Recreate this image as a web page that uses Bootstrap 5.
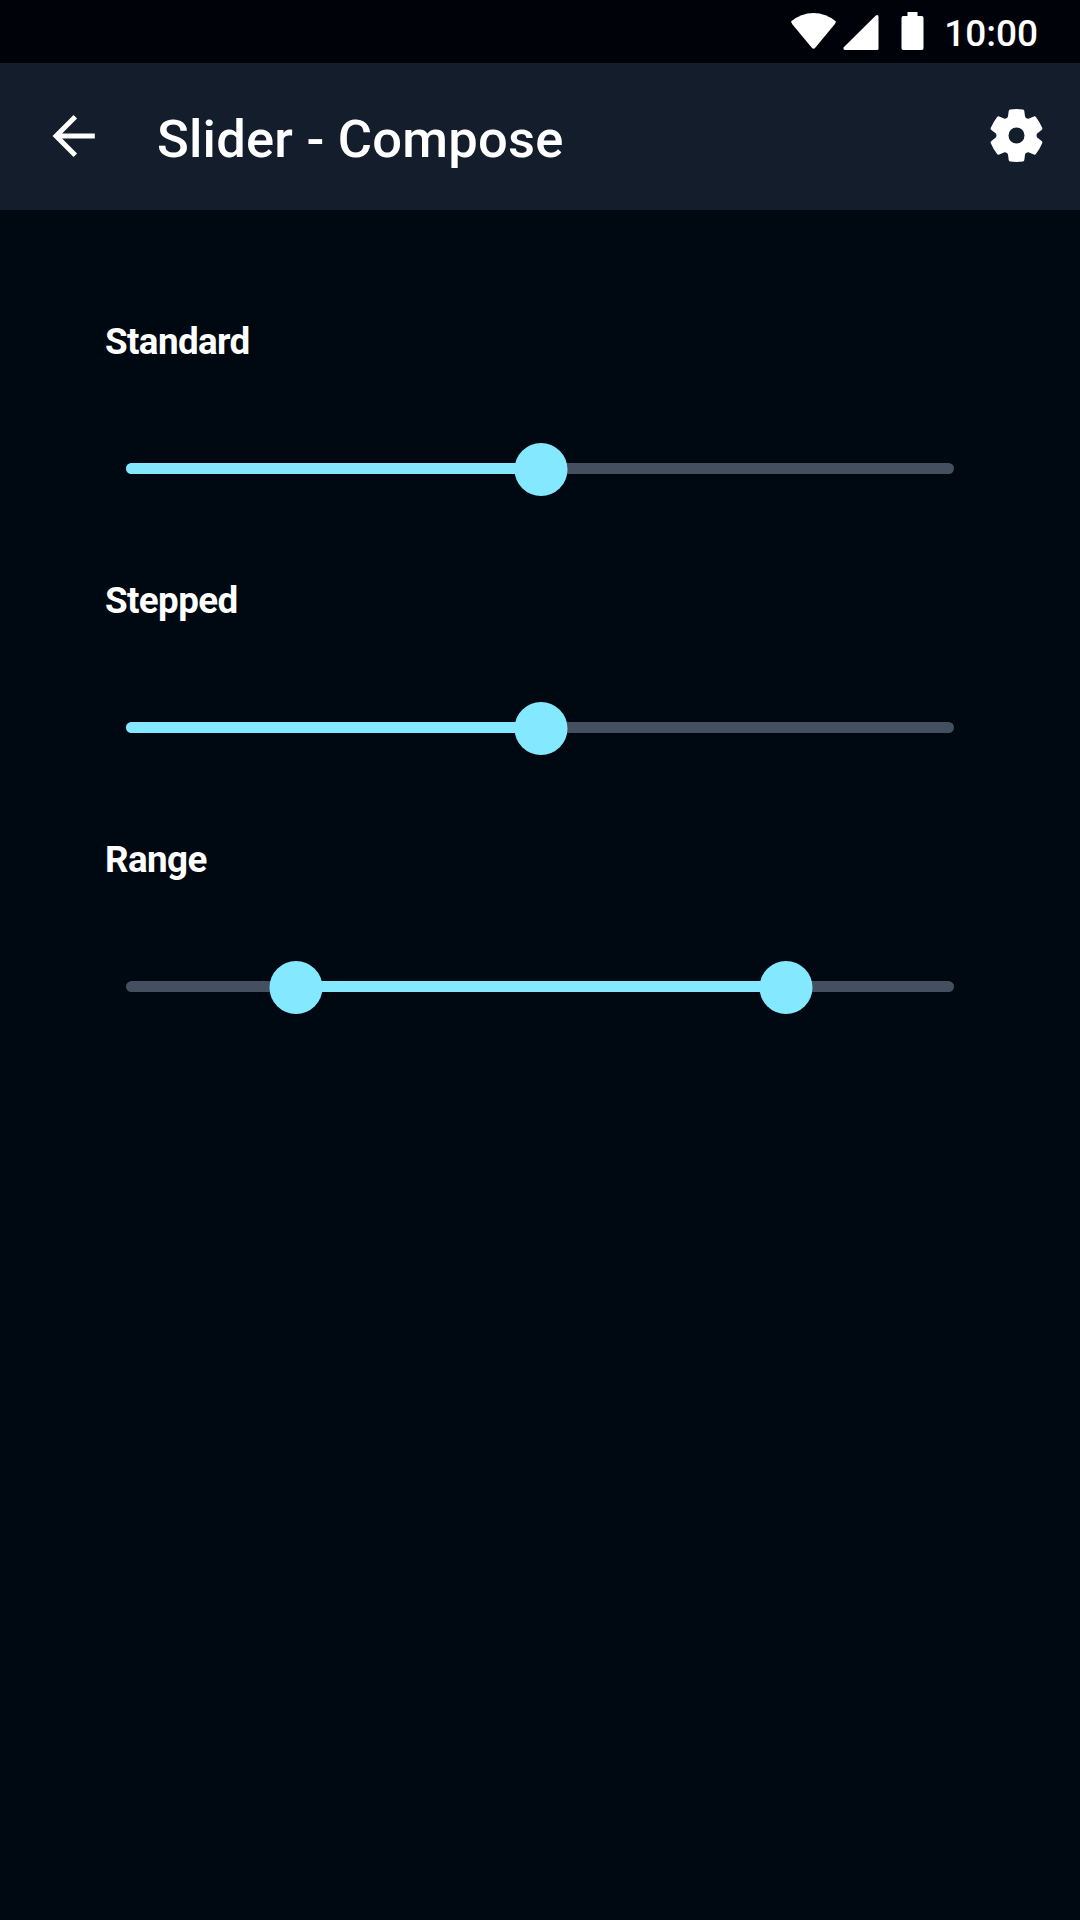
<!DOCTYPE html>
<html lang="en" data-bs-theme="dark">
<head>
<meta charset="utf-8">
<meta name="viewport" content="width=device-width, initial-scale=1">
<title>Slider - Compose</title>
<link href="https://cdn.jsdelivr.net/npm/bootstrap@5.3.0/dist/css/bootstrap.min.css" rel="stylesheet">
<style>
body{background:#000811;color:#fff;font-family:Roboto,"Liberation Sans",sans-serif;min-height:1920px}
.status-strip{height:63px;background:#000209;padding-right:42px}
.status-strip svg{height:63px;width:138px;margin-right:15px}
.clock{font-size:37px;font-weight:500;line-height:63px;padding-top:3px}
.app-bar{height:147px;background:#141d2b;padding:0 36px 0 52px}
.app-title{font-size:52.5px;font-weight:500;line-height:63px;margin:5px 0 0 62px;letter-spacing:.22px}
.icon-btn{line-height:0;color:#fff}
.icon-btn svg{display:block;margin-bottom:1px}
.content-area{padding:105px 105px 0}
.slider-block{height:259px}
.slider-title{font-size:36.75px;font-weight:700;line-height:53px;margin:0;letter-spacing:-.6px}
.track-wrap{margin:75px 21px 0;height:53px}
.track-line{height:11px;border-radius:6px;background:#44505f;width:100%;margin-top:-2px}
.track-fill{height:11px;background:#84e8ff}
.from-start{border-radius:6px 0 0 6px}
.knob{width:53px;height:53px;border-radius:50%;background:#84e8ff;top:0;transform:translateX(-50%)}
</style>
</head>
<body>
<div class="status-strip d-flex justify-content-end align-items-center">
<svg viewBox="0 0 138 63" fill="#fff" aria-hidden="true">
<path d="M0 21.500Q10 13 22.500 13T45 21.500Q44.500 23 43.500 24.500L24 48Q22.500 49.500 21 48L1.500 24.500Q.5 23 0 21.500Z"/>
<path d="M84.800 15.500Q87.500 13.800 87.500 16.800V48.500Q87.500 50 86 50H54Q52.500 50 52.500 48.500V47.500Z"/>
<path d="M116.500 12H126.500V16H130.800Q132.500 16 132.500 17.700V48.300Q132.500 50 130.800 50H112.200Q110.500 50 110.500 48.300V17.700Q110.500 16 112.200 16H116.500Z"/>
</svg>
<span class="clock">10:00</span>
</div>
<header class="app-bar d-flex align-items-center">
<a class="icon-btn" href="#" aria-label="Back"><svg width="43" height="42" viewBox="0 0 43 42" fill="none" stroke="#fff" stroke-width="5"><path d="M42.800 21H5M23.300 1.800L4.100 21L23.300 40.200"/></svg></a>
<h1 class="app-title">Slider - Compose</h1>
<a class="icon-btn ms-auto" href="#" aria-label="Settings"><svg width="55" height="54" viewBox="-27.500 -26.500 55 54" fill="#fff">
<defs><path id="tooth" d="M-10 -17.300C-9.300 -17.700 -8.700 -18.200 -8.500 -19.300L-7.800 -24.500Q-7.700 -25.900 -6.400 -26.100Q0 -26.900 6.400 -26.100Q7.700 -25.900 7.800 -24.500L8.500 -19.300C8.700 -18.200 9.300 -17.700 10 -17.300L7 -12.100H-7Z"/></defs>
<circle r="13.900" fill="none" stroke="#fff" stroke-width="11.800"/>
<use href="#tooth"/><use href="#tooth" transform="rotate(60)"/><use href="#tooth" transform="rotate(120)"/><use href="#tooth" transform="rotate(180)"/><use href="#tooth" transform="rotate(240)"/><use href="#tooth" transform="rotate(300)"/>
</svg></a>
</header>
<main class="content-area">
<section class="slider-block">
<h2 class="slider-title">Standard</h2>
<div class="track-wrap position-relative d-flex align-items-center">
<div class="track-line"><div class="track-fill from-start" style="width:50%"></div></div>
<span class="knob position-absolute" style="left:50.07%"></span>
</div>
</section>
<section class="slider-block">
<h2 class="slider-title">Stepped</h2>
<div class="track-wrap position-relative d-flex align-items-center">
<div class="track-line"><div class="track-fill from-start" style="width:50%"></div></div>
<span class="knob position-absolute" style="left:50.07%"></span>
</div>
</section>
<section class="slider-block">
<h2 class="slider-title">Range</h2>
<div class="track-wrap position-relative d-flex align-items-center">
<div class="track-line"><div class="track-fill" style="width:59.2%;margin-left:20.4%"></div></div>
<span class="knob position-absolute" style="left:20.5%"></span>
<span class="knob position-absolute" style="left:79.66%"></span>
</div>
</section>
</main>
<script src="https://cdn.jsdelivr.net/npm/bootstrap@5.3.0/dist/js/bootstrap.bundle.min.js"></script>
</body>
</html>
